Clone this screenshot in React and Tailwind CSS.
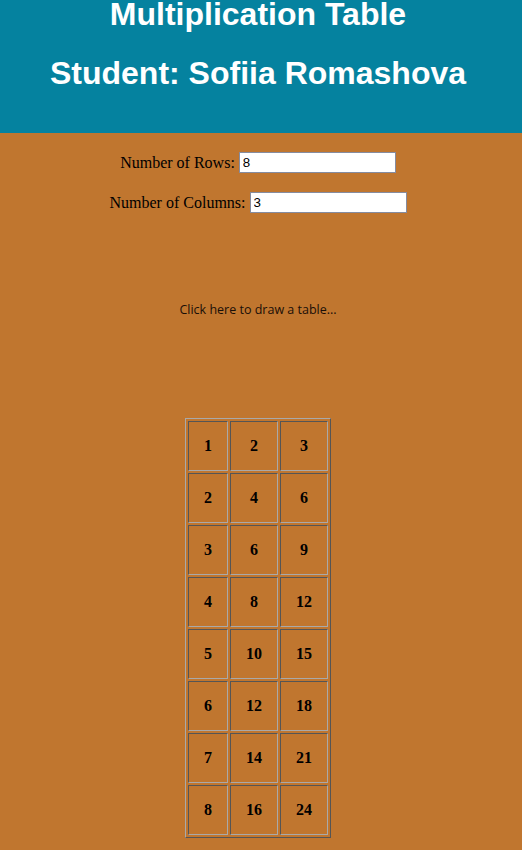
import React from 'react';

const ROWS = 8;
const COLS = 3;

const FormRow = ({ label, value, className = '' }) => (
  <div className={`flex items-center justify-center h-[21px] pr-[6px] ${className}`}>
    <span className="text-[16px] text-black">{label}</span>
    <input
      type="text"
      defaultValue={value}
      className="ml-[4px] w-[157px] h-[21px] border border-[#858ca0] bg-white pl-[3px] text-[13.33px] text-black font-['Liberation_Sans',Arial,sans-serif] outline-none"
    />
  </div>
);

const App = () => {
  const rows = Array.from({ length: ROWS }, (_, r) => r + 1);
  const cols = Array.from({ length: COLS }, (_, c) => c + 1);

  return (
    <div className="min-h-screen bg-[#c0762f] font-['Liberation_Serif','Times_New_Roman',serif] pb-[12px]">
      <header className="h-[133px] overflow-hidden bg-[#05829f] text-white text-center font-['Liberation_Sans',Arial,sans-serif] font-bold">
        <h1 className="mt-[-4px] pr-[6px] text-[32px] leading-[37px]">Multiplication Table</h1>
        <h1 className="mt-[22px] pr-[6px] text-[32px] leading-[37px]">Student: Sofiia Romashova</h1>
      </header>

      <FormRow label="Number of Rows:" value="8" className="mt-[19px]" />
      <FormRow label="Number of Columns:" value="3" className="mt-[19px]" />

      <div className="mt-[88px] pr-[6px] text-center text-[12.5px] leading-[17px] text-[#1a0f08] font-['Open_Sans','Noto_Sans',sans-serif] cursor-pointer">
        Click here to draw a table...
      </div>

      <div className="mt-[100px] flex justify-center pr-[6px]">
        <table className="border-separate border-spacing-[2px] border border-t-[#a9a9a9] border-l-[#a9a9a9] border-r-[#555555] border-b-[#555555]">
          <tbody>
            {rows.map((r) => (
              <tr key={r}>
                {cols.map((c) => (
                  <td
                    key={c}
                    className="p-[15px] text-center font-bold text-[16px] leading-[18px] text-black border border-t-[#555555] border-l-[#555555] border-r-[#a9a9a9] border-b-[#a9a9a9]"
                  >
                    {r * c}
                  </td>
                ))}
              </tr>
            ))}
          </tbody>
        </table>
      </div>
    </div>
  );
};

export default App;
